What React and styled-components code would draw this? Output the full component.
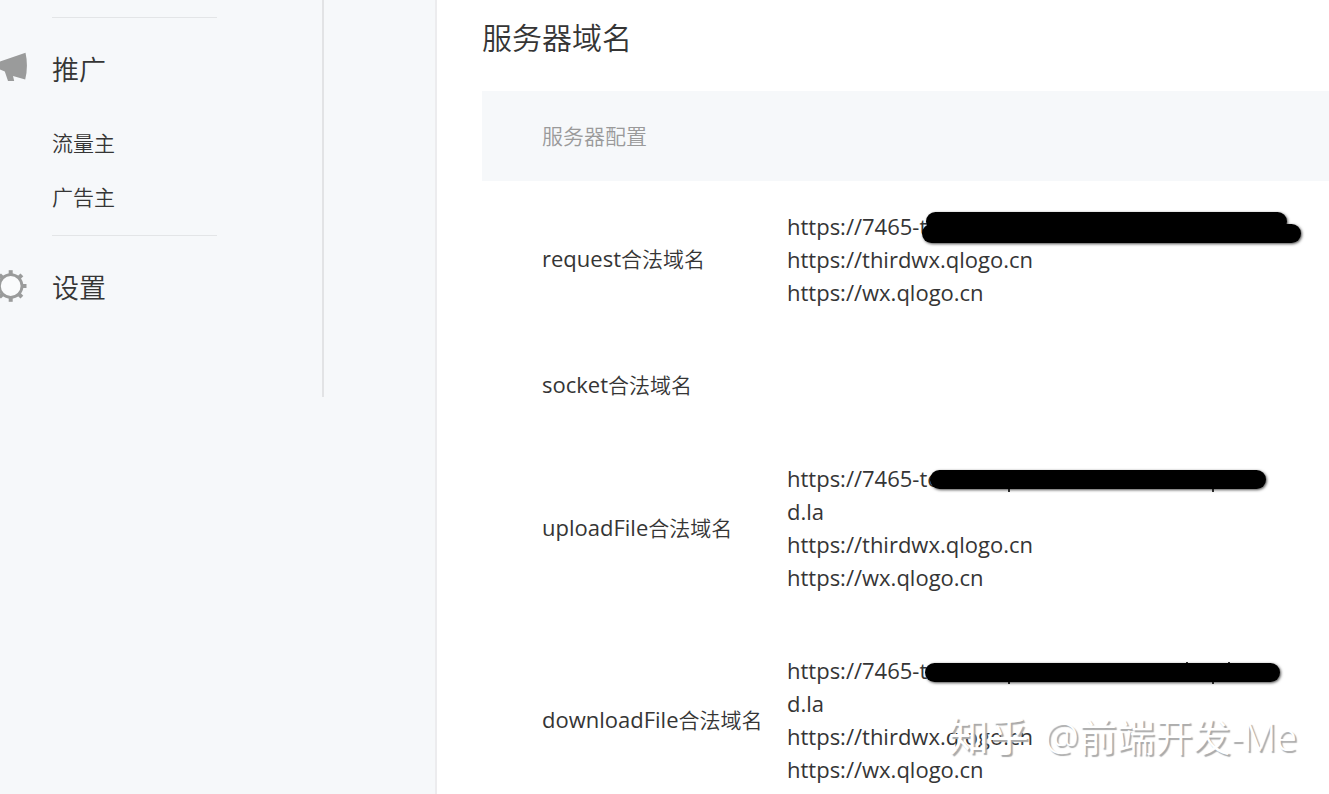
import React from 'react';
import styled, { createGlobalStyle } from 'styled-components';

const GlobalStyle = createGlobalStyle`
  * {
    box-sizing: border-box;
  }

  body {
    margin: 0;
    overflow: hidden;
    background-color: #fff;
    color: #353535;
    font-family: 'Noto Sans', 'Noto Sans CJK SC', sans-serif;
    font-size: 21px;
    font-weight: 350;
    line-height: 33px;
  }
`;

const StyledPage = styled.div`
  display: flex;
  height: 100vh;
  overflow: hidden;
`;

const StyledSidebar = styled.aside`
  flex: 0 0 437px;
  background-color: #f6f8fa;
  border-right: 2px solid #ececee;
`;

const StyledMenu = styled.nav`
  width: 324px;
  padding: 17px 0 63px;
  border-right: 2px solid #e2e3e5;
`;

const StyledSection = styled.section`
  padding-bottom: ${({ $spaced }) => ($spaced ? '11px' : '0')};
`;

const StyledDivider = styled.hr`
  width: 165px;
  height: 1px;
  margin: 0 0 0 52px;
  border: 0;
  background-color: #e3e5e7;
`;

const StyledSectionTitle = styled.h2`
  display: flex;
  align-items: center;
  gap: 24px;
  margin: 0;
  padding: 32px 0 26px;
  font-size: 27px;
  font-weight: inherit;
  line-height: 40px;
`;

const StyledIcon = styled.svg`
  width: 28px;
  height: 36px;
  fill: #9a9b9b;
`;

const StyledLink = styled.a`
  display: block;
  padding-left: 52px;
  color: inherit;
  line-height: 54px;
  text-decoration: none;
`;

const StyledMain = styled.main`
  flex: 1;
  min-width: 0;
  padding-left: 45px;
`;

const StyledHeading = styled.h1`
  margin: 0;
  padding: 15px 0 31px;
  font-size: 30px;
  font-weight: inherit;
  line-height: 45px;
`;

const StyledTable = styled.table`
  width: 100%;
  border-collapse: collapse;
  table-layout: fixed;
`;

const StyledHeadCell = styled.th`
  height: 90px;
  padding: 0 60px;
  background-color: #f6f8fa;
  color: #9a9a9a;
  font-weight: inherit;
  text-align: left;
`;

const StyledNameCell = styled.th`
  padding: 29px 0 31px 60px;
  font-weight: inherit;
  text-align: left;
  white-space: nowrap;
`;

const StyledApiName = styled.span`
  font-family: 'Open Sans', 'Noto Sans', sans-serif;
  font-size: 22px;
  font-weight: 400;
  line-height: 1;
`;

const StyledDomainCell = styled.td`
  padding: 29px 0 31px;
  font-family: 'Open Sans', 'Noto Sans', sans-serif;
  font-size: 22px;
  font-weight: 400;
`;

const StyledDomain = styled.div`
  position: relative;
`;

const StyledBar = styled.span`
  position: absolute;
  top: ${({ $top }) => $top}px;
  left: ${({ $left }) => $left}px;
  width: ${({ $width }) => $width}px;
  height: 19px;
  border-radius: 10px;
  background-color: #000;
  box-shadow: 1px 1px 3px rgba(0, 0, 0, 0.7);
`;

const StyledStem = styled.span`
  position: absolute;
  top: ${({ $top }) => $top}px;
  left: ${({ $left }) => $left}px;
  width: 2px;
  height: 4px;
  background-color: #353535;
`;

const StyledWatermark = styled.div`
  position: absolute;
  right: 32px;
  bottom: 32px;
  display: flex;
  align-items: baseline;
  gap: 16px;
  color: #fff;
  font-size: 38px;
  line-height: 52px;
  text-shadow: 2px 2px 1px #aaa;
  white-space: nowrap;
`;

const StyledBrand = styled.span`
  font-size: 40px;
  font-weight: 400;
`;

const MegaphoneIcon = () => (
  <StyledIcon viewBox="0 0 28 36" aria-hidden="true">
    <path d="M0 9.500 L25.500 0.800 Q28.500 14 25.200 27.500 L13 24 L14.200 29 H8 L4.800 19.600 L0 17.500 Z" />
  </StyledIcon>
);

const GearIcon = () => (
  <StyledIcon viewBox="0 0 28 36" aria-hidden="true">
    <circle cx="10.700" cy="16" r="11.300" fill="#fafbfc" stroke="#9a9b9b" strokeWidth="2.800" />
    {[0, 45, 90, 135, 180, 225, 270, 315].map(angle => (
      <rect
        key={angle}
        x="8.700"
        y="0.200"
        width="4"
        height="4.500"
        transform={`rotate(${angle} 10.700 16)`}
      />
    ))}
  </StyledIcon>
);

const rows = [
  {
    name: 'request',
    domains: [
      {
        text: 'https://7465-t',
        bars: [
          { top: 14, left: 135, width: 379 },
          { top: 2, left: 139, width: 361 }
        ]
      },
      { text: 'https://thirdwx.qlogo.cn' },
      { text: 'https://wx.qlogo.cn' }
    ]
  },
  { name: 'socket', domains: [] },
  {
    name: 'uploadFile',
    domains: [
      {
        text: 'https://7465-te',
        bars: [{ top: 8, left: 143, width: 336 }],
        stems: [{ top: 26, left: 221 }, { top: 26, left: 425 }]
      },
      { text: 'd.la' },
      { text: 'https://thirdwx.qlogo.cn' },
      { text: 'https://wx.qlogo.cn' }
    ]
  },
  {
    name: 'downloadFile',
    domains: [
      {
        text: 'https://7465-t',
        bars: [{ top: 9, left: 138, width: 355 }],
        stems: [
          { top: 26, left: 221 },
          { top: 26, left: 425 },
          { top: 8, left: 399 },
          { top: 8, left: 441 }
        ]
      },
      { text: 'd.la' },
      { text: 'https://thirdwx.qlogo.cn' },
      { text: 'https://wx.qlogo.cn' }
    ]
  }
];

const Domain = ({ text, bars = [], stems = [] }) => (
  <StyledDomain>
    {text}
    {stems.map(({ top, left }) => (
      <StyledStem key={`${top}-${left}`} $top={top} $left={left} />
    ))}
    {bars.map(({ top, left, width }) => (
      <StyledBar key={left} $top={top} $left={left} $width={width} />
    ))}
  </StyledDomain>
);

const App = () => (
  <>
    <GlobalStyle />
    <StyledPage>
      <StyledSidebar>
        <StyledMenu>
          <StyledDivider />
          <StyledSection $spaced>
            <StyledSectionTitle>
              <MegaphoneIcon />
              推广
            </StyledSectionTitle>
            <StyledLink href="#traffic">流量主</StyledLink>
            <StyledLink href="#advertiser">广告主</StyledLink>
          </StyledSection>
          <StyledDivider />
          <StyledSection>
            <StyledSectionTitle>
              <GearIcon />
              设置
            </StyledSectionTitle>
          </StyledSection>
        </StyledMenu>
      </StyledSidebar>
      <StyledMain>
        <StyledHeading>服务器域名</StyledHeading>
        <StyledTable>
          <colgroup>
            <col width="305" />
            <col />
          </colgroup>
          <thead>
            <tr>
              <StyledHeadCell colSpan={2}>服务器配置</StyledHeadCell>
            </tr>
          </thead>
          <tbody>
            {rows.map(({ name, domains }) => (
              <tr key={name}>
                <StyledNameCell scope="row">
                  <StyledApiName>{name}</StyledApiName>
                  合法域名
                </StyledNameCell>
                <StyledDomainCell>
                  {domains.map(domain => (
                    <Domain key={domain.text} {...domain} />
                  ))}
                </StyledDomainCell>
              </tr>
            ))}
          </tbody>
        </StyledTable>
      </StyledMain>
      <StyledWatermark>
        <StyledBrand>知乎</StyledBrand>
        <span>@前端开发-Me</span>
      </StyledWatermark>
    </StyledPage>
  </>
);

export default App;
